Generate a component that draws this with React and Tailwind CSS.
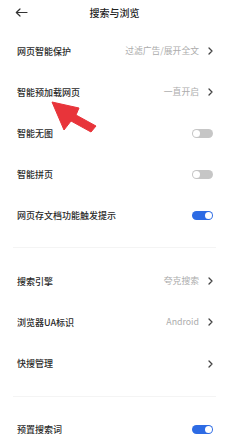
import React from "react";

const font = { fontFamily: '"Noto Sans CJK SC", "Noto Sans", sans-serif' };

function Chevron() {
  return (
    <svg width="5" height="8" viewBox="0 0 5 8" className="ml-[9px]">
      <path d="M1 1 L4 4 L1 7" fill="none" stroke="#444" strokeWidth="1.3" strokeLinecap="round" strokeLinejoin="round" />
    </svg>
  );
}

function Toggle({ on }) {
  return (
    <div
      className={
        "w-[21px] h-[9px] rounded-full flex items-center px-[1px] " +
        (on ? "bg-[#2d6be4] justify-end" : "bg-[#c6c6c6] justify-start")
      }
    >
      <div className="w-[7px] h-[7px] rounded-full bg-white" />
    </div>
  );
}

function Row({ label, value, chevron, toggle }) {
  return (
    <div className="h-[41px] flex items-center justify-between pl-[17px] pr-[16px]">
      <span className="text-[9px] text-[#2a2a2a] font-medium leading-none">{label}</span>
      <div className="flex items-center">
        {value && <span className="text-[8.8px] text-[#acacac] leading-none">{value}</span>}
        {chevron && <Chevron />}
        {toggle !== undefined && <Toggle on={toggle} />}
      </div>
    </div>
  );
}

export default function App() {
  return (
    <div className="relative w-[229px] h-[441px] bg-white overflow-hidden" style={font}>
      <div className="relative h-[25px] flex items-center justify-center">
        <svg width="13" height="9" viewBox="0 0 13 9" className="absolute left-[15px] top-[8px]">
          <path d="M12 4.5 H1.5 M5 1 L1.3 4.5 L5 8" fill="none" stroke="#333" strokeWidth="1.2" strokeLinecap="round" strokeLinejoin="round" />
        </svg>
        <span className="text-[10px] font-medium text-[#222] leading-none">搜索与浏览</span>
      </div>
      <div className="pt-[6px]">
        <Row label="网页智能保护" value="过滤广告/展开全文" chevron />
        <Row label="智能预加载网页" value="一直开启" chevron />
        <Row label="智能无图" toggle={false} />
        <Row label="智能拼页" toggle={false} />
        <Row label="网页存文档功能触发提示" toggle={true} />
      </div>
      <div className="mt-[11px] mx-[13px] h-px bg-[#f4f4f4]" />
      <div className="pt-[13px]">
        <Row label="搜索引擎" value="夸克搜索" chevron />
        <Row label="浏览器UA标识" value="Android" chevron />
        <Row label="快搜管理" chevron />
      </div>
      <div className="mt-[12px] mx-[13px] h-px bg-[#f4f4f4]" />
      <div className="pt-[12px]">
        <Row label="预置搜索词" toggle={true} />
      </div>
      <svg className="absolute left-0 top-0 pointer-events-none" width="229" height="441" viewBox="0 0 229 441">
        <polygon points="52,102 79,108 76,115 96,126 91,132 71,121 64,130" fill="#e8343a" stroke="#e8343a" strokeWidth="1" strokeLinejoin="round" />
      </svg>
    </div>
  );
}
